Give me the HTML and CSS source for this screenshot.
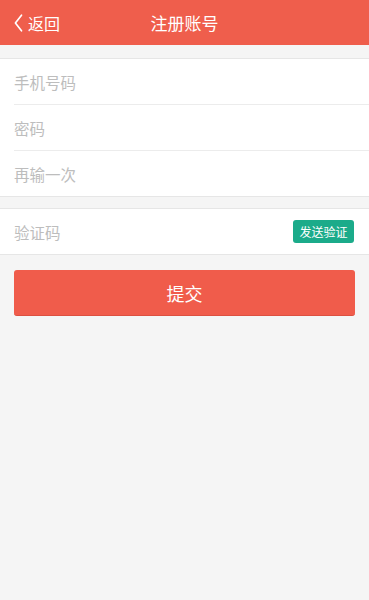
FILE: index.html
```html
<!DOCTYPE html>
<html lang="zh">
<head>
<meta charset="utf-8">
<title>注册账号</title>
<link rel="stylesheet" href="styles.css">
</head>
<body>
<header class="topbar">
  <a class="back" href="#">
    <svg class="chev" width="9" height="18" viewBox="0 0 9 18"><path d="M7.5 1.2 L1.4 9 L7.5 16.8" fill="none" stroke="#fff" stroke-width="1.7" stroke-linecap="round" stroke-linejoin="round"/></svg>
    <span>返回</span>
  </a>
  <h1 class="title">注册账号</h1>
</header>
<section class="group first">
  <div class="row"><input class="field" placeholder="手机号码"></div>
  <div class="row"><input class="field" type="password" placeholder="密码"></div>
  <div class="row last"><input class="field" type="password" placeholder="再输一次"></div>
</section>
<section class="group second">
  <div class="row last code">
    <input class="field" placeholder="验证码">
    <button class="send">发送验证</button>
  </div>
</section>
<div class="actions"><button class="submit">提交</button></div>
</body>
</html>
```
FILE: styles.css
```css
* { box-sizing: border-box; }
html, body { margin: 0; padding: 0; }
body {
  background: #f5f5f5;
  font-family: "Noto Sans CJK SC", "Noto Sans", sans-serif;
  width: 369px;
  min-height: 600px;
}
.topbar {
  height: 45px;
  background: #ef5e4c;
  display: flex;
  align-items: center;
  position: relative;
  color: #fff;
}
.back {
  display: flex;
  align-items: center;
  gap: 5px;
  padding-left: 14px;
  color: #fff;
  text-decoration: none;
  font-size: 16px;
  position: relative;
  z-index: 1;
}
.chev { display: block; }
.title {
  position: absolute;
  left: 0; right: 0; top: 0;
  height: 45px;
  line-height: 45px;
  margin: 0;
  text-align: center;
  font-size: 17px;
  font-weight: normal;
}
.group {
  background: #fff;
  border-top: 1px solid #e6e6e6;
  border-bottom: 1px solid #e6e6e6;
}
.group.first { margin-top: 13px; }
.group.second { margin-top: 11px; }
.row {
  height: 46px;
  margin-left: 14px;
  border-bottom: 1px solid #ececec;
  display: flex;
  align-items: center;
  padding-right: 15px;
}
.row.last { border-bottom: none; height: 45px; }
.field {
  flex: 1;
  border: none;
  outline: none;
  background: transparent;
  font-family: inherit;
  font-size: 15.5px;
  padding: 0;
  color: #333;
}
.field::placeholder { color: #bdbdbd; }
.send {
  background: #1bab8a;
  color: #fff;
  border: none;
  border-radius: 3px;
  height: 23px;
  width: 61px;
  padding: 0;
  font-family: inherit;
  font-size: 12px;
}
.actions { padding: 15px 14px 0; }
.submit {
  width: 100%;
  height: 46px;
  background: #f05c4b;
  color: #fff;
  border: none;
  border-radius: 3px;
  font-family: inherit;
  font-size: 18px;
  border-bottom: 1px solid #dc5040;
}
```
